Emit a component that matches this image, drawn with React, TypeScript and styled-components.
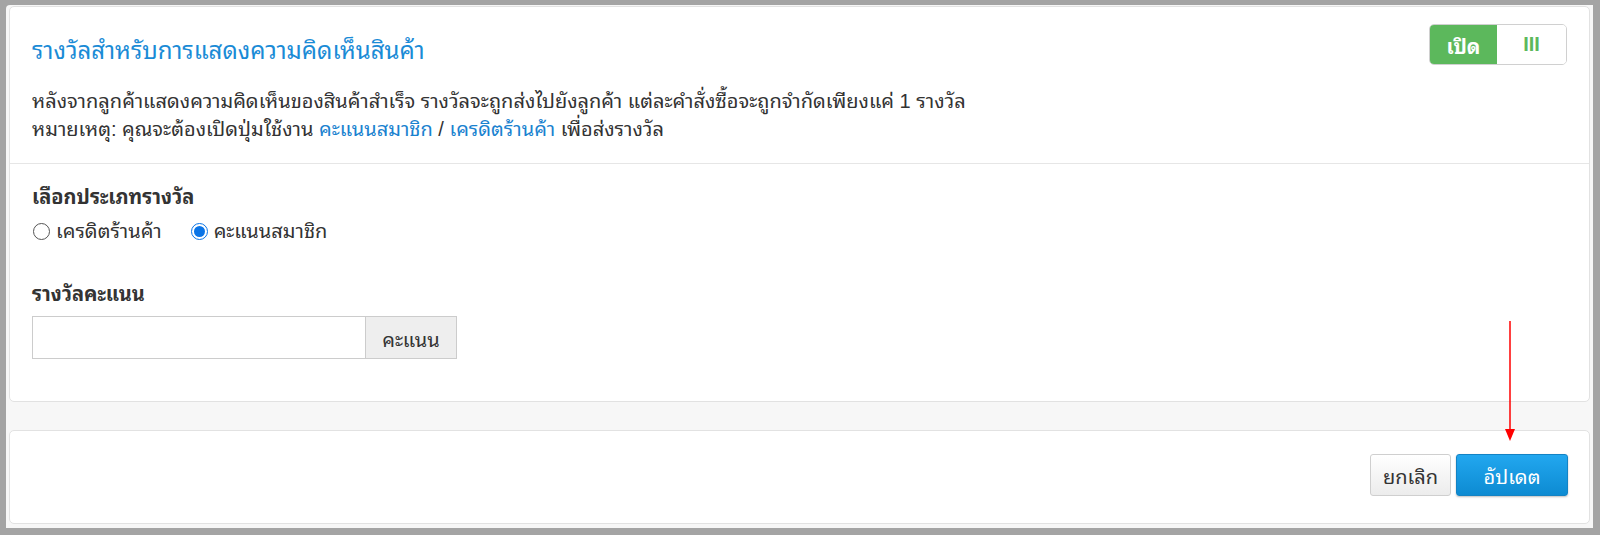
import React from "react";
import styled, { createGlobalStyle } from "styled-components";

const GlobalStyle = createGlobalStyle`
  html, body { margin: 0; padding: 0; }
  body {
    background: #a4a4a4;
    font-family: "Liberation Sans", "Noto Sans Thai Looped", sans-serif;
    color: #333;
  }
  * { box-sizing: border-box; }
`;

const Frame = styled.div`
  margin: 5px 7px 7px 6px;
  height: 523px;
  background: #f7f7f7;
  border-top-left-radius: 4px;
  padding: 1px 3px 0 3px;
  display: flex;
  flex-direction: column;
  gap: 28px;
  position: relative;
`;

const Panel = styled.section<{ $h: number }>`
  background: #fff;
  border: 1px solid #e2e2e2;
  border-radius: 5px;
  height: ${(p) => p.$h}px;
`;

const Header = styled.div`
  padding: 17px 22px 0 22px;
  height: 157px;
  border-bottom: 1px solid #e6e6e6;
`;

const HeaderTop = styled.div`
  display: flex;
  justify-content: space-between;
  align-items: flex-start;
`;

const Title = styled.h2`
  margin: 12px 0 0 0;
  font-size: 24px;
  font-weight: 400;
  color: #1a8bd6;
  line-height: 30px;
`;

const Toggle = styled.div`
  display: flex;
  width: 138px;
  height: 41px;
  border: 1px solid #d0d0d0;
  border-radius: 5px;
  overflow: hidden;
`;

const ToggleHalf = styled.div<{ $on?: boolean }>`
  flex: ${(p) => (p.$on ? "0 0 67px" : "1")};
  display: flex;
  align-items: center;
  justify-content: center;
  background: ${(p) => (p.$on ? "#5cb85c" : "#fff")};
  color: ${(p) => (p.$on ? "#fff" : "#5cb85c")};
  font-weight: 700;
  font-size: 20px;
`;

const Desc = styled.p`
  margin: 21px 0 0 0;
  font-size: 20px;
  line-height: 28px;
  color: #333;
`;

const Link = styled.a`
  color: #1a82cf;
  text-decoration: none;
`;

const Body = styled.div`
  padding: 20px 22px 0 22px;
`;

const Label = styled.div`
  font-size: 20px;
  font-weight: 700;
  color: #333;
  line-height: 27px;
`;

const RadioRow = styled.div`
  display: flex;
  gap: 28px;
  margin-top: 7px;
`;

const RadioItem = styled.label`
  display: flex;
  align-items: center;
  gap: 6px;
  font-size: 20px;
  line-height: 27px;
  color: #333;
`;

const RadioCircle = styled.span<{ $checked?: boolean }>`
  width: 17px;
  height: 17px;
  border-radius: 50%;
  border: 1px solid ${(p) => (p.$checked ? "#0a74e6" : "#555")};
  background: #fff;
  display: flex;
  align-items: center;
  justify-content: center;
  margin-left: 1px;
  &::after {
    content: "";
    display: ${(p) => (p.$checked ? "block" : "none")};
    width: 11px;
    height: 11px;
    border-radius: 50%;
    background: #0a74e6;
  }
`;

const Group = styled.div`
  margin-top: 36px;
`;

const InputGroup = styled.div`
  display: flex;
  width: 425px;
  height: 43px;
  margin-top: 8px;
  border: 1px solid #ccc;
`;

const Input = styled.div`
  flex: 1;
  background: #fff;
`;

const Addon = styled.div`
  width: 91px;
  border-left: 1px solid #ccc;
  background: #eee;
  display: flex;
  align-items: center;
  justify-content: center;
  font-size: 20px;
  color: #333;
`;

const Footer = styled(Panel)`
  display: flex;
  justify-content: flex-end;
  align-items: center;
  gap: 5px;
  padding: 0 21px 4px 0;
`;

const Button = styled.button<{ $primary?: boolean }>`
  height: 42px;
  padding: 0;
  font-family: inherit;
  font-size: 20px;
  border-radius: 3px;
  border: 1px solid ${(p) => (p.$primary ? "#1483c4" : "#cfcfcf")};
  background: ${(p) =>
    p.$primary
      ? "linear-gradient(#22a7ef, #0d8bd2)"
      : "linear-gradient(#ffffff, #ececec)"};
  color: ${(p) => (p.$primary ? "#fff" : "#333")};
  box-shadow: ${(p) => (p.$primary ? "0 1px 2px rgba(0,0,0,0.25)" : "none")};
  width: ${(p) => (p.$primary ? "112px" : "81px")};
`;

const Arrow = styled.svg`
  position: absolute;
  left: 1496px;
  top: 316px;
`;

export default function App() {
  return (
    <>
      <GlobalStyle />
      <Frame>
        <Panel $h={396}>
          <Header>
            <HeaderTop>
              <Title>รางวัลสำหรับการแสดงความคิดเห็นสินค้า</Title>
              <Toggle>
                <ToggleHalf $on>เปิด</ToggleHalf>
                <ToggleHalf>III</ToggleHalf>
              </Toggle>
            </HeaderTop>
            <Desc>
              หลังจากลูกค้าแสดงความคิดเห็นของสินค้าสำเร็จ รางวัลจะถูกส่งไปยังลูกค้า แต่ละคำสั่งซื้อจะถูกจำกัดเพียงแค่ 1 รางวัล
              <br />
              หมายเหตุ: คุณจะต้องเปิดปุ่มใช้งาน <Link>คะแนนสมาชิก</Link> / <Link>เครดิตร้านค้า</Link> เพื่อส่งรางวัล
            </Desc>
          </Header>
          <Body>
            <Label>เลือกประเภทรางวัล</Label>
            <RadioRow>
              <RadioItem>
                <RadioCircle />
                เครดิตร้านค้า
              </RadioItem>
              <RadioItem>
                <RadioCircle $checked />
                คะแนนสมาชิก
              </RadioItem>
            </RadioRow>
            <Group>
              <Label>รางวัลคะแนน</Label>
              <InputGroup>
                <Input />
                <Addon>คะแนน</Addon>
              </InputGroup>
            </Group>
          </Body>
        </Panel>
        <Footer $h={94}>
          <Button>ยกเลิก</Button>
          <Button $primary>อัปเดต</Button>
        </Footer>
        <Arrow width="16" height="122" viewBox="0 0 16 122">
          <line x1="8" y1="0" x2="8" y2="112" stroke="#f00" strokeWidth="1.5" />
          <polygon points="3,108 13,108 8,120" fill="#f00" />
        </Arrow>
      </Frame>
    </>
  );
}
